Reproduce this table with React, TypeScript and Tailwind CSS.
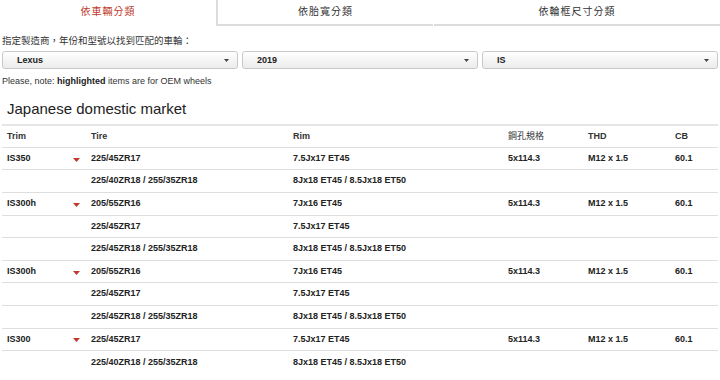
import React from "react";

type Row = { trim?: string; tire: string; rim: string; pcd?: string; thd?: string; cb?: string };

const rows: Row[] = [
  { trim: "IS350", tire: "225/45ZR17", rim: "7.5Jx17 ET45", pcd: "5x114.3", thd: "M12 x 1.5", cb: "60.1" },
  { tire: "225/40ZR18 / 255/35ZR18", rim: "8Jx18 ET45 / 8.5Jx18 ET50" },
  { trim: "IS300h", tire: "205/55ZR16", rim: "7Jx16 ET45", pcd: "5x114.3", thd: "M12 x 1.5", cb: "60.1" },
  { tire: "225/45ZR17", rim: "7.5Jx17 ET45" },
  { tire: "225/45ZR18 / 255/35ZR18", rim: "8Jx18 ET45 / 8.5Jx18 ET50" },
  { trim: "IS300h", tire: "205/55ZR16", rim: "7Jx16 ET45", pcd: "5x114.3", thd: "M12 x 1.5", cb: "60.1" },
  { tire: "225/45ZR17", rim: "7.5Jx17 ET45" },
  { tire: "225/45ZR18 / 255/35ZR18", rim: "8Jx18 ET45 / 8.5Jx18 ET50" },
  { trim: "IS300", tire: "225/45ZR17", rim: "7.5Jx17 ET45", pcd: "5x114.3", thd: "M12 x 1.5", cb: "60.1" },
  { tire: "225/40ZR18 / 255/35ZR18", rim: "8Jx18 ET45 / 8.5Jx18 ET50" },
];

const cols = "grid grid-cols-[84px_202px_215px_80px_87px_1fr]";

function Caret({ className }: { className: string }) {
  return (
    <svg width="7" height="4" viewBox="0 0 7 4" className={className}>
      <path d="M0 0H7L3.5 4Z" fill="currentColor" />
    </svg>
  );
}

function Select({ value }: { value: string }) {
  return (
    <div className="flex h-[18px] flex-1 items-center rounded-[3px] border border-[#c8c8c8] bg-gradient-to-b from-white to-[#ececec] pl-[14px] pr-[8px] text-[9px] font-bold text-[#222]">
      <span>{value}</span>
      <Caret className="ml-auto text-[#444] w-[5px] h-[3px]" />
    </div>
  );
}

export default function App() {
  return (
    <div className="w-[720px] h-[380px] overflow-hidden bg-white text-[#222]" style={{ fontFamily: '"Liberation Sans", Arial, "Noto Sans CJK TC", sans-serif' }}>
      {/* tabs */}
      <div className="flex h-[26px] text-[10px] tracking-[1px]">
        <div className="flex w-[216px] items-center justify-center pb-[3px] text-[#c0392b]">依車輛分類</div>
        <div className="flex w-[217px] items-center justify-center border-b-2 border-l-2 border-[#dcdcdc] pb-[1px] text-[#333]">依胎寬分類</div>
        <div className="ml-[1px] flex flex-1 items-center justify-center border-b-2 border-[#dcdcdc] pb-[1px] text-[#333]">依輪框尺寸分類</div>
      </div>

      <div className="px-[2px]">
        <div className="mt-[8px] text-[9.5px] text-[#333]">指定製造商，年份和型號以找到匹配的車輪：</div>
        <div className="mt-[3px] flex gap-[4px]">
          <Select value="Lexus" />
          <Select value="2019" />
          <Select value="IS" />
        </div>
        <div className="mt-[6px] text-[9px] text-[#333]">
          Please, note: <b className="text-[#222]">highlighted</b> items are for OEM wheels
        </div>

        <h2 className="mt-[11px] pl-[5px] text-[15px] leading-[18px] text-[#222]">Japanese domestic market</h2>

        <div className="mt-[6px] border-t-2 border-[#e6e6e6] text-[9px] font-bold">
          <div className={`${cols} h-[22px] items-center border-b border-[#dedede] text-[#333]`}>
            <div className="pl-[5px]">Trim</div>
            <div className="pl-[5px]">Tire</div>
            <div className="pl-[5px]">Rim</div>
            <div className="pl-[5px] font-normal">鋼孔規格</div>
            <div className="pl-[5px]">THD</div>
            <div className="pl-[5px]">CB</div>
          </div>
          {rows.map((r, i) => (
            <div
              key={i}
              className={`${cols} h-[22.6px] items-center ${i < rows.length - 1 ? "border-b border-[#dedede]" : ""}`}
            >
              <div className="flex items-center pl-[5px] pr-[6px]">
                <span>{r.trim ?? ""}</span>
                {r.trim && <Caret className="ml-auto mt-[2px] text-[#c0392b]" />}
              </div>
              <div className="pl-[5px]">{r.tire}</div>
              <div className="pl-[5px]">{r.rim}</div>
              <div className="pl-[5px]">{r.pcd ?? ""}</div>
              <div className="pl-[5px]">{r.thd ?? ""}</div>
              <div className="pl-[5px]">{r.cb ?? ""}</div>
            </div>
          ))}
        </div>
      </div>
    </div>
  );
}
